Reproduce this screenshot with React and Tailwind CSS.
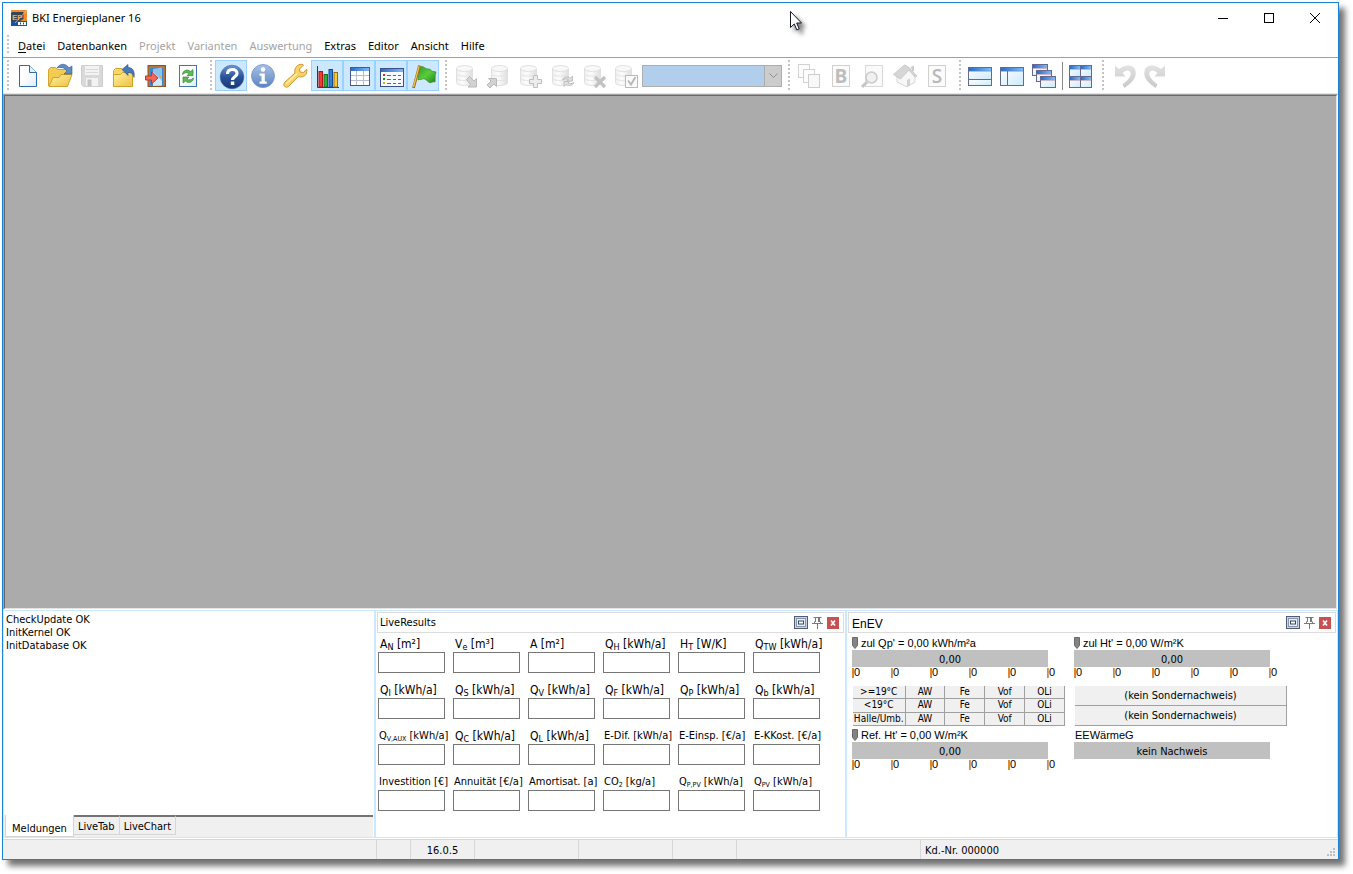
import { useState } from 'react';

const MENU = [
  { label: 'Datei' },
  { label: 'Datenbanken' },
  { label: 'Projekt', disabled: true },
  { label: 'Varianten', disabled: true },
  { label: 'Auswertung', disabled: true },
  { label: 'Extras' },
  { label: 'Editor' },
  { label: 'Ansicht' },
  { label: 'Hilfe' },
];

const RESULTS = [
  ['A', 'N', 'm²'],
  ['V', 'e', 'm³'],
  ['A', '', 'm²'],
  ['Q', 'H', 'kWh/a'],
  ['H', 'T', 'W/K'],
  ['Q', 'TW', 'kWh/a'],
  ['Q', 'I', 'kWh/a'],
  ['Q', 'S', 'kWh/a'],
  ['Q', 'V', 'kWh/a'],
  ['Q', 'F', 'kWh/a'],
  ['Q', 'P', 'kWh/a'],
  ['Q', 'b', 'kWh/a'],
  ['Q', 'V,AUX', 'kWh/a', true],
  ['Q', 'C', 'kWh/a'],
  ['Q', 'L', 'kWh/a'],
  ['E-Dif.', '', 'kWh/a', true],
  ['E-Einsp.', '', '€/a', true],
  ['E-KKost.', '', '€/a', true],
  ['Investition', '', '€', true],
  ['Annuität', '', '€/a', true],
  ['Amortisat.', '', 'a', true],
  ['CO', '2', 'kg/a', true],
  ['Q', 'P,PV', 'kWh/a', true],
  ['Q', 'PV', 'kWh/a', true],
];

const MESSAGES = ['CheckUpdate OK', 'InitKernel OK', 'InitDatabase OK'];

const ZONES = ['>=19°C', '<19°C', 'Halle/Umb.'];
const PARTS = ['AW', 'Fe', 'Vof', 'OLi'];

function Grip({ first = false, short = false }) {
  return (
    <svg
      className={`${first ? 'ml-1' : 'ml-1.5'} mr-[3px] w-0.5 flex-shrink-0 ${short ? 'h-5' : 'h-[31px]'}`}
      aria-hidden="true"
    >
      <line x1="1" y1="0" x2="1" y2="31" stroke="#c4c4c4" strokeWidth="2" strokeDasharray="2 2" />
    </svg>
  );
}

function ToolButton({ title, active = false, disabled = false, children }) {
  return (
    <button
      type="button"
      aria-label={title}
      disabled={disabled}
      className={`h-[31px] w-8 flex-shrink-0 ${active ? 'border border-[#99d1ff] bg-[#cce8ff]' : ''}`}
    >
      <svg viewBox="0 0 32 31" className={active ? '-m-px h-[31px] w-8 max-w-none' : 'h-[31px] w-8'} fill="none">
        {children}
      </svg>
    </button>
  );
}

function Cylinder({ x = 6 }) {
  return (
    <g transform={`translate(${x} 5)`}>
      <path d="M.5 3.5v14c0 4 16 4 16 0v-14" fill="url(#silver)" stroke="#e0e0e0" />
      <ellipse cx="8.5" cy="3.5" rx="8" ry="3" fill="#f8f8f8" stroke="#e0e0e0" />
      <path d="M.5 8.5c0 3.500 16 3.500 16 0M.5 13c0 3.500 16 3.500 16 0" stroke="#e4e4e4" />
    </g>
  );
}

// Small framed window with a blue caption, used by the layout icons
function MiniWindow({ x, y, w, h }) {
  return (
    <g>
      <rect x={x + 0.5} y={y + 0.5} width={w - 1} height={h - 1} fill="url(#pane)" stroke="#66698f" />
      <rect x={x + 1} y={y + 1} width={w - 2} height="3" fill="url(#caption)" />
      <path d={`M${x + 1} ${y + 4.5}h${w - 2}`} stroke="#c9b9c6" />
    </g>
  );
}

function IconDefs() {
  return (
    <svg className="absolute h-0 w-0" aria-hidden="true">
      <defs>
        <linearGradient id="silver" x1="0" x2="1">
          <stop offset="0" stopColor="#f0f0f0" />
          <stop offset=".4" stopColor="#fcfcfc" />
          <stop offset="1" stopColor="#dedede" />
        </linearGradient>
        <linearGradient id="gold" x1="0" y1="0" x2="1" y2="1">
          <stop offset="0" stopColor="#fff1a4" />
          <stop offset="1" stopColor="#edc13e" />
        </linearGradient>
        <linearGradient id="pane" x1="0" y1="0" x2="1" y2="1">
          <stop offset="0" stopColor="#ffffff" />
          <stop offset="1" stopColor="#cdeafb" />
        </linearGradient>
        <linearGradient id="caption" x1="0" x2="1">
          <stop offset="0" stopColor="#2a6cc9" />
          <stop offset="1" stopColor="#7fb9f2" />
        </linearGradient>
        <linearGradient id="paper" x1="0" y1="0" x2="1" y2="1">
          <stop offset=".4" stopColor="#ffffff" />
          <stop offset="1" stopColor="#dcecfb" />
        </linearGradient>
        <linearGradient id="navy" x1="0" y1="0" x2="0" y2="1">
          <stop offset="0" stopColor="#6f97cf" />
          <stop offset=".5" stopColor="#2a529a" />
          <stop offset="1" stopColor="#163876" />
        </linearGradient>
        <linearGradient id="steel" x1="0" y1="0" x2="0" y2="1">
          <stop offset="0" stopColor="#a9c2e6" />
          <stop offset="1" stopColor="#5d83be" />
        </linearGradient>
        <linearGradient id="leaf" x1="0" y1="0" x2="1" y2="1">
          <stop offset="0" stopColor="#2f9f22" />
          <stop offset=".5" stopColor="#5ccb3c" />
          <stop offset="1" stopColor="#1d861a" />
        </linearGradient>
        <linearGradient id="ash" x1="0" y1="0" x2="0" y2="1">
          <stop offset="0" stopColor="#e2e2e2" />
          <stop offset="1" stopColor="#c8c8c8" />
        </linearGradient>
      </defs>
    </svg>
  );
}

function TitleBar() {
  return (
    <header className="flex h-[29px] flex-shrink-0 items-center pl-2">
      <svg width="16" height="16" viewBox="0 0 16 16" aria-hidden="true">
        <rect width="16" height="16" fill="#ef8e2c" />
        <path d="M0 3l1-1h11.500v7L9 11H0z" fill="#3b4453" />
        <path d="M0 11h16v5H0z" fill="#17559c" />
        <path d="M4 13L16 0" stroke="#fbc68c" strokeWidth=".7" />
        <text x="1" y="9.500" fontSize="8" fontWeight="700" fontFamily="Liberation Sans, sans-serif" fill="#f7a64b">
          EP
        </text>
        <rect x="7" y="12" width="8" height="3" fill="#fff" />
        <path d="M9.500 12.500v2M12.500 12.500v2" stroke="#17559c" />
      </svg>
      <h1 className="ml-[5px] flex-1 font-['Noto_Sans',sans-serif] text-[11px] leading-4">BKI Energieplaner 16</h1>
      <button type="button" aria-label="Minimieren" className="flex h-full w-[46px] items-center justify-center">
        <svg width="10" height="10" stroke="#000">
          <path d="M0 5.500h10" />
        </svg>
      </button>
      <button type="button" aria-label="Maximieren" className="flex h-full w-[46px] items-center justify-center">
        <svg width="10" height="10" stroke="#000" fill="none">
          <rect x=".5" y=".5" width="9" height="9" />
        </svg>
      </button>
      <button type="button" aria-label="Schließen" className="flex h-full w-[46px] items-center justify-center">
        <svg width="10" height="10" stroke="#000">
          <path d="M0 0l10 10M10 0L0 10" />
        </svg>
      </button>
    </header>
  );
}

function MenuBar() {
  return (
    <nav className="flex h-[26px] flex-shrink-0 items-center border-b border-[#a0a0a0]">
      <Grip first short />
      <div className="ml-1.5 flex gap-3 pt-0.5 font-['Noto_Sans',sans-serif] text-[11px] leading-4">
        {MENU.map((m, i) => (
          <button
            key={m.label}
            type="button"
            disabled={m.disabled}
            className={m.disabled ? 'text-[#a3a3a3]' : 'text-black'}
          >
            {i === 0 ? (
              <>
                <span className="underline underline-offset-2">D</span>atei
              </>
            ) : (
              m.label
            )}
          </button>
        ))}
      </div>
    </nav>
  );
}

function Toolbar() {
  return (
    <div role="toolbar" className="flex h-9 flex-shrink-0 items-center border-b border-[#e3e3e3]">
      <Grip first />
      <ToolButton title="Neu">
        <path d="M7.500 5.500h10l7 7v14h-17z" fill="url(#paper)" stroke="#2f6cab" />
        <path d="M17.500 5.500v7h7" fill="#e4f0fb" stroke="#2f6cab" />
      </ToolButton>
      <ToolButton title="Öffnen">
        <path d="M4.500 26V9.500l2-2h5l2 2h10V15" fill="#f2cb52" stroke="#d3a52c" />
        <path d="M5 26.500l4-9h6l2-3h11l-4.500 12z" fill="url(#gold)" stroke="#d0a029" />
        <path d="M13 8c3-5 9-5 12 0l3-2v8h-8l3-3c-3-4-6-4-10-3z" fill="#5c8cc6" stroke="#2d5c97" strokeWidth=".6" />
      </ToolButton>
      <ToolButton title="Speichern" disabled>
        <path d="M5.500 5.500h21v21h-19l-2-2z" fill="#d9d9d9" stroke="#cfcfcf" />
        <rect x="9" y="6" width="14" height="9" fill="#f3f3f3" />
        <path d="M10 9.500h12M10 12.500h12" stroke="#d9d9d9" />
        <rect x="10" y="18" width="12" height="8" fill="#f3f3f3" />
        <rect x="11.500" y="19.500" width="4" height="6.500" fill="#c4c4c4" />
      </ToolButton>
      <ToolButton title="Projekt laden">
        <path d="M5.500 26V10.500l2-2h6l2 2h9V26z" fill="#f6d768" stroke="#d3a52c" />
        <path d="M5.500 26.500V14.500h7l2-2h10v14z" fill="url(#gold)" stroke="#d0a029" />
        <path d="M14 9.500l6-5v3c5 0 7 4 6 10-1-4-3-5-6-5v3z" fill="#4778b8" stroke="#24508d" strokeWidth=".6" />
      </ToolButton>
      <ToolButton title="Beenden">
        <rect x="8" y="5.500" width="17.500" height="21" fill="#b5763a" stroke="#8a5522" />
        <rect x="10" y="8" width="13" height="18" fill="#3f86cb" />
        <path d="M13 9l9-1.500v18L13 26z" fill="#8cc2f0" />
        <path d="M13 12l9 9v4.500L13 26z" fill="#cfe8fb" />
        <circle cx="20.500" cy="17" r="1" fill="#e3ae2b" />
        <path d="M5.500 16h6v-4l6.500 6-6.500 6v-4h-6z" fill="#f0685a" stroke="#c4352b" />
      </ToolButton>
      <ToolButton title="Aktualisieren">
        <rect x="7.500" y="5.500" width="17" height="21" fill="url(#paper)" stroke="#3f78b0" />
        <path d="M10.500 14.500c0-4 5-6 8-3l2.500-2v6h-6l2-2c-2-1.500-4-1-6.500 1z" fill="#5fb955" stroke="#2c8229" strokeWidth=".6" />
        <path d="M21.500 18c0 4-5 6-8 3l-2.500 2v-6h6l-2 2c2 1.500 4 1 6.500-1z" fill="#5fb955" stroke="#2c8229" strokeWidth=".6" />
      </ToolButton>

      <Grip />
      <ToolButton title="Hilfe" active>
        <circle cx="17" cy="17" r="11.800" fill="url(#navy)" stroke="#3c62a4" strokeWidth=".6" />
        <path d="M12.500 14c0-3 2-4.500 4.800-4.500s4.700 1.600 4.700 4c0 3.200-4.500 3.200-4.500 6.500" stroke="#fff" strokeWidth="3.200" />
        <rect x="15.800" y="21.500" width="3.500" height="3.500" fill="#fff" />
      </ToolButton>
      <ToolButton title="Info">
        <circle cx="16" cy="16" r="11.500" fill="url(#steel)" stroke="#7593c4" strokeWidth=".8" />
        <circle cx="16" cy="9.500" r="2.200" fill="#fff" />
        <path d="M12.500 13.500h5.300v8h2v2.200h-7.300v-2.200h2v-5.800h-2z" fill="#fff" />
      </ToolButton>
      <ToolButton title="Einstellungen">
        <path
          d="M21 4.500c2-.5 3 0 3.500.5l-4 4 .5 3 3.500.5 3.200-3.500c1 4-1.500 8-6 8-1.200 0-2-.2-2.500-.4L9.500 26.500c-3 2-6-1-4-4L16 13c-1-4 1.500-8 5-8.500z"
          fill="#f9d362"
          stroke="#cf9634"
        />
        <path d="M7 24L18 13.500" stroke="#fff0b0" strokeWidth="1.500" />
      </ToolButton>
      <ToolButton title="LiveChart" active>
        <path d="M6.500 6v21.500H28" stroke="#143a78" />
        <rect x="8" y="11.500" width="3.500" height="15.500" fill="#f23a31" stroke="#a81a1a" />
        <rect x="13" y="14.500" width="3.500" height="12.500" fill="#37a93c" stroke="#176d1c" />
        <rect x="18" y="9.500" width="3.500" height="17.500" fill="#2f83dc" stroke="#164c94" />
        <rect x="23" y="12.500" width="3.500" height="14.500" fill="#f8c93c" stroke="#9c6c12" />
      </ToolButton>
      <ToolButton title="LiveTab" active>
        <rect x="7.500" y="7.500" width="19" height="18" fill="#fff" stroke="#49568f" />
        <rect x="8" y="8" width="18" height="3" fill="url(#caption)" />
        <path d="M13.500 11v14M20.500 11v14M8 15.500h18M8 20.500h18" stroke="#b9bbd2" />
      </ToolButton>
      <ToolButton title="LiveResults" active>
        <rect x="5.500" y="8.500" width="23" height="18" fill="#f8fbff" stroke="#3b4f8b" />
        <rect x="6" y="9" width="22" height="3" fill="url(#caption)" />
        <path d="M12 15.500h4m2 0h3m2 0h3M12 19.500h4m2 0h3m2 0h3M12 23.500h4m2 0h3m2 0h3" stroke="#59618f" />
        <path d="M8 15h2" stroke="#f02819" strokeWidth="2" />
        <path d="M8 19h2" stroke="#129d17" strokeWidth="2" />
        <path d="M8 23h2" stroke="#e9a811" strokeWidth="2" />
      </ToolButton>
      <ToolButton title="EnEV" active>
        <path
          d="M12.500 8c3-4 5 1 8.500 1 2 0 3 .5 3 2l5 1c-1.500 3-.5 6-1 10-3-1-4 2-6.500 0s-4-4-6-3c-2 .8-3 0-4.500 1z"
          fill="url(#leaf)"
          stroke="#2c8824"
          strokeWidth=".7"
        />
        <path d="M12.500 5.500L6.500 28" stroke="#a26d14" strokeWidth="2.800" />
        <path d="M12 6.500L6.500 27" stroke="#eec557" strokeWidth="1.200" />
      </ToolButton>

      <Grip />
      <ToolButton title="Datensatz exportieren" disabled>
        <Cylinder />
        <path d="M16.500 19.500l3-3 4.500 4.500 2.500-2.500v8.500h-8.500l2.500-2.500z" fill="#d2d2d2" stroke="#bababa" />
      </ToolButton>
      <ToolButton title="Datensatz importieren" disabled>
        <Cylinder x={9} />
        <path d="M6.500 18.500h8v8l-2.500-2.500-4 4-3-3 4-4z" fill="#d2d2d2" stroke="#bababa" />
      </ToolButton>
      <ToolButton title="Datensatz hinzufügen" disabled>
        <Cylinder />
        <path d="M19.500 15.500h4v4h4v4h-4v4h-4v-4h-4v-4h4z" fill="#ececec" stroke="#bfbfbf" />
      </ToolButton>
      <ToolButton title="Datensatz aktualisieren" disabled>
        <Cylinder />
        <path
          d="M16.500 20c1-3 5-4 8-2l2-2v5h-5.500l1.500-1.500c-2-1-4-1-6 .5zM28 22.500c-1 3-5 4-8 2l-2 2v-5h5.500L22 23c2 1 4 1 6-.5z"
          fill="#e0e0e0"
          stroke="#bfbfbf"
        />
      </ToolButton>
      <ToolButton title="Datensatz löschen" disabled>
        <Cylinder />
        <path d="M17 17l10 10M27 17L17 27" stroke="#c2c2c2" strokeWidth="3.200" />
      </ToolButton>
      <ToolButton title="Datensatz prüfen" disabled>
        <Cylinder x={5} />
        <rect x="15.500" y="15.500" width="12" height="12" fill="#fafafa" stroke="#bababa" />
        <path d="M18 20.500l3 4 4.500-7.500" stroke="#bababa" strokeWidth="2" />
      </ToolButton>
      <div className="relative h-[22px] w-[140px] flex-shrink-0">
        <select
          aria-label="Variante"
          disabled
          className="h-full w-full appearance-none rounded-none border border-[#adadad] bg-[#b1ceec] opacity-100"
        />
        <span className="pointer-events-none absolute inset-y-0 right-0 flex w-[18px] items-center justify-center border border-[#adadad] bg-[#cccccc]">
          <svg width="9" height="6" fill="none" stroke="#8f8f8f">
            <path d="M.5 .5l4 4 4-4" />
          </svg>
        </span>
      </div>

      <Grip />
      <ToolButton title="Kopieren" disabled>
        <rect x="5.500" y="4.500" width="11" height="13" fill="#fdfdfd" stroke="#d2d2d2" />
        <rect x="10.500" y="9.500" width="11" height="13" fill="#fdfdfd" stroke="#d2d2d2" />
        <rect x="15.500" y="14.500" width="11" height="13" fill="#f8f8f8" stroke="#cdcdcd" />
      </ToolButton>
      <ToolButton title="Bauteile" disabled>
        <rect x="7.500" y="5.500" width="17" height="21" fill="#fbfbfb" stroke="#d0d0d0" />
        <text x="16" y="23" textAnchor="middle" fontSize="19" fontWeight="700" fontFamily="Open Sans, sans-serif" fill="#bdbdbd">
          B
        </text>
      </ToolButton>
      <ToolButton title="Vorschau" disabled>
        <rect x="8.500" y="5.500" width="17" height="21" fill="#fafafa" stroke="#d9d9d9" />
        <path d="M5 27l5-5" stroke="#c6c6c6" strokeWidth="3" />
        <circle cx="14.500" cy="17.500" r="5.500" fill="#f0f0f0" stroke="#cbcbcb" strokeWidth="1.500" />
      </ToolButton>
      <ToolButton title="Gebäude" disabled>
        <path d="M8 16v6l10 5 8-5v-7l-5-6z" fill="#f7f7f7" stroke="#d6d6d6" />
        <path d="M4.500 14.500L15.500 5l4 2 8.500 9-2 1-6-7-8.500 9z" fill="#d6d6d6" stroke="#c9c9c9" />
        <path d="M18 20l3-1.500v7l-3 1.500z" fill="#d2d2d2" />
        <path d="M22 8l2-1v4" stroke="#cecece" strokeWidth="2" />
      </ToolButton>
      <ToolButton title="Statistik" disabled>
        <rect x="7.500" y="5.500" width="17" height="21" fill="#fbfbfb" stroke="#d0d0d0" />
        <text x="16" y="23" textAnchor="middle" fontSize="19" fontWeight="600" fontFamily="Open Sans, sans-serif" fill="#b8b8b8">
          S
        </text>
      </ToolButton>

      <Grip />
      <ToolButton title="Untereinander">
        <MiniWindow x={4} y={7} w={24} h={13} />
        <rect x="4.500" y="19.500" width="23" height="6" fill="url(#pane)" stroke="#66698f" />
      </ToolButton>
      <ToolButton title="Nebeneinander">
        <MiniWindow x={4} y={7} w={24} h={19} />
        <path d="M11.500 11v15" stroke="#66698f" />
      </ToolButton>
      <ToolButton title="Überlappend">
        <MiniWindow x={4} y={4} w={16} h={12} />
        <MiniWindow x={8} y={10} w={16} h={12} />
        <MiniWindow x={12} y={16} w={16} h={12} />
      </ToolButton>
      <span className="mx-px h-7 w-0.5 flex-shrink-0 border-r border-[#8a8a8a]" />
      <ToolButton title="Kacheln">
        <MiniWindow x={5} y={5} w={12} h={12} />
        <MiniWindow x={16} y={5} w={12} h={12} />
        <MiniWindow x={5} y={16} w={12} h={12} />
        <MiniWindow x={16} y={16} w={12} h={12} />
      </ToolButton>

      <Grip />
      <ToolButton title="Rückgängig" disabled>
        <path d="M8 5.500l4 3.500c6-5 15-5 16.500 2 1.500 7-4 12-11 17l-2-3.500c5-4 9-8 8-12-1-3-5-2.500-8 .5l3 3.500H8z" fill="url(#ash)" />
      </ToolButton>
      <ToolButton title="Wiederholen" disabled>
        <path d="M26 5.500L22 9C16 4 7 4 5.500 11c-1.500 7 4 12 11 17l2-3.500c-5-4-9-8-8-12 1-3 5-2.500 8 .5l-3 3.500H26z" fill="url(#ash)" />
      </ToolButton>
    </div>
  );
}

function PanelHeader({ title, className = '' }) {
  return (
    <div className="mx-px mt-px flex h-[21px] items-center gap-1 border border-[#dcdcdc] pl-0.5 pr-1">
      <h2 className={`flex-1 pt-0.5 ${className}`}>{title}</h2>
      <button type="button" aria-label="Maximieren">
        <svg width="14" height="13" fill="none" className="block">
          <rect x=".5" y=".5" width="13" height="12" fill="#c4d5ec" stroke="#515c74" />
          <rect x="2.500" y="2.500" width="9" height="8" fill="#e9f0fa" stroke="#8794ae" />
          <rect x="4.500" y="5" width="5" height="3" fill="#fff" stroke="#39445e" />
        </svg>
      </button>
      <button type="button" aria-label="Anheften">
        <svg width="11" height="12" fill="none" stroke="#7a7a7a" className="block">
          <path d="M1.500 .5h8M3.500 1v4M6.500 1v4M7.500 1v4M2.500 4.500v2M8.500 4.500v2M0 6.500h11M5.500 7v5" />
        </svg>
      </button>
      <button type="button" aria-label="Schließen">
        <svg width="12" height="12" className="block">
          <rect width="12" height="12" fill="#c75050" />
          <path d="M4 3.500l4 5M8 3.500l-4 5" stroke="#fff" strokeWidth="1.600" />
        </svg>
      </button>
    </div>
  );
}

function MessagePanel() {
  const [tab, setTab] = useState('Meldungen');
  return (
    <section className="flex w-[370px] flex-shrink-0 flex-col bg-white">
      <div className="flex-1 pl-0.5 pt-0.5 leading-[13px]">
        {MESSAGES.map((m) => (
          <p key={m}>{m}</p>
        ))}
      </div>
      <div role="tablist" className="mr-px flex h-[22px] flex-shrink-0 items-start bg-[#f0f0f0] pl-px">
        {['Meldungen', 'LiveTab', 'LiveChart'].map((t) => (
          <button
            key={t}
            type="button"
            role="tab"
            aria-selected={tab === t}
            onClick={() => setTab(t)}
            className={
              tab === t
                ? 'h-[22px] border-b border-l border-r border-[#d5d5d5] bg-white px-1.5 pt-1.5'
                : 'h-5 border-b border-r border-t-2 border-[#d5d5d5] border-t-[#737373] px-1 pt-0.5'
            }
          >
            {t}
          </button>
        ))}
        <span className="h-0.5 flex-1 bg-[#737373]" />
      </div>
    </section>
  );
}

function ResultField({ name, sub, unit, small }) {
  const id = `res-${name}-${sub}-${unit}`;
  return (
    <div className="w-[67px]">
      <label
        htmlFor={id}
        className={`block h-[18px] whitespace-nowrap leading-5 ${small ? 'pl-px text-[11px]' : 'pl-0.5 text-[12px]'}`}
      >
        {name}
        {sub && <sub className={small ? 'text-[7px]' : 'text-[9px]'}>{sub}</sub>} [{unit}]
      </label>
      <input id={id} readOnly className="block h-[21px] w-full border border-[#767676] bg-white px-1 outline-none" />
    </div>
  );
}

function LiveResults() {
  return (
    <section className="w-[469px] flex-shrink-0 bg-white">
      <PanelHeader title="LiveResults" />
      <div className="grid grid-cols-[repeat(6,67px)] gap-x-2 gap-y-[7px] pl-0.5 pt-px">
        {RESULTS.map(([name, sub, unit, small]) => (
          <ResultField key={`${name}${sub}${unit}`} name={name} sub={sub} unit={unit} small={small} />
        ))}
      </div>
    </section>
  );
}

function Gauge({ label }) {
  return (
    <div className="h-11 w-[196px]">
      <div className="flex h-4 items-center gap-[3px] pt-0.5 font-['Liberation_Sans',Arial,sans-serif]">
        <svg width="6" height="12" className="flex-shrink-0">
          <path d="M.5 .5h5v8l-2.500 3-2.500-3z" fill="#848484" stroke="#6a6a6a" />
        </svg>
        <span className="whitespace-nowrap">{label}</span>
      </div>
      <div className="h-[17px] bg-[#c0c0c0] text-center leading-[19px]">0,00</div>
      <div className="flex font-['Liberation_Sans',Arial,sans-serif]">
        {[0, 1, 2, 3, 4, 5].map((i) => (
          <span key={i} className="flex w-[39px] flex-shrink-0 items-center leading-[11px]">
            <i className="h-2.5 w-px bg-[#e08a34]" />
            <i className={`h-2.5 w-px ${i % 2 ? 'bg-[#dba266]' : 'bg-[#5ba5e6]'}`} />
            0
          </span>
        ))}
      </div>
    </div>
  );
}

function EnEVPanel() {
  return (
    <section className="min-w-0 flex-1 bg-white">
      <PanelHeader title="EnEV" className="pl-px font-['Liberation_Sans',Arial,sans-serif] text-[12px]" />
      <div className="flex pl-[5px] pt-px">
        <div className="w-[222px]">
          <Gauge label="zul Qp' = 0,00 kWh/m²a" />
          <table className="ml-px mt-2 h-10 w-[212px] table-fixed border-collapse text-center text-[10px] leading-3">
            <tbody>
              {ZONES.map((z) => (
                <tr key={z}>
                  <th className="w-[52px] whitespace-nowrap border-b border-r border-[#a0a0a0] bg-[#f0f0f0] p-0 font-normal">{z}</th>
                  {PARTS.map((p) => (
                    <td key={p} className="border-b border-r border-[#a0a0a0] bg-[#f0f0f0] p-0">
                      {p}
                    </td>
                  ))}
                </tr>
              ))}
            </tbody>
          </table>
          <Gauge label="Ref. Ht' = 0,00 W/m²K" />
        </div>
        <div className="w-[222px]">
          <Gauge label="zul Ht' = 0,00 W/m²K" />
          <div className="ml-px mt-2 flex w-[212px] flex-col">
            <button type="button" className="h-5 border-b border-r border-[#a0a0a0] bg-[#f0f0f0] pt-0.5">
              (kein Sondernachweis)
            </button>
            <button type="button" className="h-5 border-b border-r border-[#a0a0a0] bg-[#f0f0f0] pt-0.5">
              (kein Sondernachweis)
            </button>
          </div>
          <div className="h-4 pl-px font-['Liberation_Sans',Arial,sans-serif] leading-[18px]">EEWärmeG</div>
          <div className="h-[17px] w-[196px] bg-[#c0c0c0] text-center leading-[19px]">kein Nachweis</div>
        </div>
      </div>
    </section>
  );
}

function StatusBar() {
  return (
    <footer className="flex h-5 flex-shrink-0 items-stretch border-t border-[#d7d7d7] bg-[#f0f0f0] leading-[22px]">
      <div className="w-[374px] border-r border-[#d7d7d7]" />
      <div className="w-[34px] border-r border-[#d7d7d7]" />
      <div className="w-16 border-r border-[#d7d7d7] text-center">16.0.5</div>
      <div className="w-[104px] border-r border-[#d7d7d7]" />
      <div className="w-[94px] border-r border-[#d7d7d7]" />
      <div className="w-16 border-r border-[#d7d7d7]" />
      <div className="w-[184px] border-r border-[#d7d7d7]" />
      <div className="flex-1 pl-1">Kd.-Nr. 000000</div>
      <svg width="11" height="11" className="self-end" fill="#bfbfbf">
        <path d="M6 0h2v2h-2zM6 3h2v2h-2zM3 3h2v2h-2zM6 6h2v2h-2zM3 6h2v2h-2zM0 6h2v2h-2z" />
      </svg>
    </footer>
  );
}

export default function App() {
  return (
    <div className="relative flex h-screen flex-col bg-white pb-3.5 pl-0.5 pr-3.5 pt-0.5 font-['DejaVu_Sans_Condensed','DejaVu_Sans',sans-serif] text-[11px] text-black">
      <IconDefs />
      <div className="flex min-h-0 flex-1 flex-col border border-[#1883d7] bg-white shadow-[6px_6px_6px_rgba(0,0,0,0.55)]">
        <TitleBar />
        <MenuBar />
        <Toolbar />
        <main className="flex min-h-0 flex-1 border border-b-white border-l-[#a0a0a0] border-r-white border-t-[#a0a0a0]">
          <div className="flex-1 border border-b-[#e3e3e3] border-l-[#696969] border-r-[#e3e3e3] border-t-[#696969] bg-[#ababab]" />
        </main>
        <div className="mb-px flex h-[228px] flex-shrink-0 gap-0.5 bg-[#cce8ff] p-px">
          <MessagePanel />
          <LiveResults />
          <EnEVPanel />
        </div>
        <StatusBar />
      </div>

      {/* Mouse pointer */}
      <svg className="absolute left-[790px] top-[11px] drop-shadow-[4px_4px_2px_rgba(0,0,0,0.5)]" width="12" height="20">
        <path d="M.5 .5v16l3.800-3.600 2.500 6 2.400-1-2.500-5.900h4.800z" fill="#fff" stroke="#15152b" />
      </svg>
    </div>
  );
}
